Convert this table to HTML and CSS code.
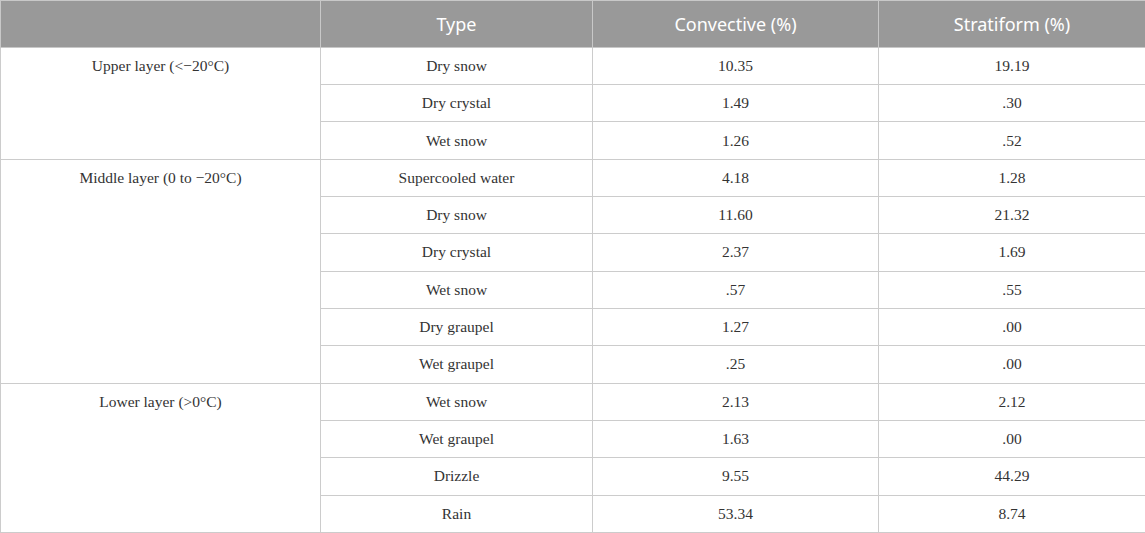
FILE: index.html
```html
<!DOCTYPE html>
<html lang="en">
<head>
    <meta charset="UTF-8">
    <title>Hydrometeor types by layer</title>
    <link rel="stylesheet" href="styles.css">
</head>
<body>
    <table class="data-table">
        <colgroup>
            <col class="col-layer">
            <col class="col-type">
            <col class="col-conv">
            <col class="col-strat">
        </colgroup>
        <thead>
            <tr>
                <th></th>
                <th>Type</th>
                <th>Convective (%)</th>
                <th>Stratiform (%)</th>
            </tr>
        </thead>
        <tbody>
            <!-- Upper layer -->
            <tr>
                <td class="layer" rowspan="3">Upper layer (&lt;&minus;20&deg;C)</td>
                <td>Dry snow</td><td>10.35</td><td>19.19</td>
            </tr>
            <tr><td>Dry crystal</td><td>1.49</td><td>.30</td></tr>
            <tr><td>Wet snow</td><td>1.26</td><td>.52</td></tr>

            <!-- Middle layer -->
            <tr>
                <td class="layer" rowspan="6">Middle layer (0 to &minus;20&deg;C)</td>
                <td>Supercooled water</td><td>4.18</td><td>1.28</td>
            </tr>
            <tr><td>Dry snow</td><td>11.60</td><td>21.32</td></tr>
            <tr><td>Dry crystal</td><td>2.37</td><td>1.69</td></tr>
            <tr><td>Wet snow</td><td>.57</td><td>.55</td></tr>
            <tr><td>Dry graupel</td><td>1.27</td><td>.00</td></tr>
            <tr><td>Wet graupel</td><td>.25</td><td>.00</td></tr>

            <!-- Lower layer -->
            <tr>
                <td class="layer" rowspan="4">Lower layer (&gt;0&deg;C)</td>
                <td>Wet snow</td><td>2.13</td><td>2.12</td>
            </tr>
            <tr><td>Wet graupel</td><td>1.63</td><td>.00</td></tr>
            <tr><td>Drizzle</td><td>9.55</td><td>44.29</td></tr>
            <tr><td>Rain</td><td>53.34</td><td>8.74</td></tr>
        </tbody>
    </table>
</body>
</html>
```

FILE: styles.css
```css
body {
    margin: 0;
    padding: 0;
    background-color: #fff;
}

.data-table {
    width: 1145px;
    border-collapse: collapse;
    table-layout: fixed;
    font-family: "Liberation Serif", serif;
    font-size: 15.5px;
    color: #333;
}

.col-layer { width: 320px; }
.col-type { width: 272px; }
.col-conv { width: 286px; }
.col-strat { width: 267px; }

.data-table th {
    height: 45.7px;
    background-color: #999;
    color: #fff;
    font-family: "Noto Sans", sans-serif;
    font-weight: normal;
    font-size: 18px;
    text-align: center;
    border: 1px solid #c8c8c8;
    padding: 0 8px;
}

.data-table td {
    height: 36.33px;
    text-align: center;
    border: 1px solid #ccc;
    padding: 0 8px;
}

.data-table td.layer {
    vertical-align: top;
    padding-top: 9px;
}
```
